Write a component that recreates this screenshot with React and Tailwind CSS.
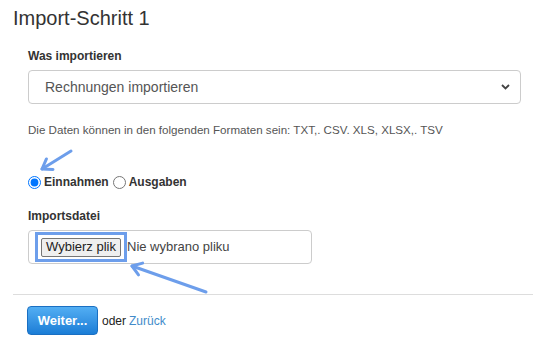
import React from "react"

function Arrow({ x1, y1, x2, y2 }) {
  // arrow pointing from (x1,y1) to tip (x2,y2)
  const a = Math.atan2(y2 - y1, x2 - x1)
  const len = 11
  const spread = 0.6
  const p1 = [x2 - len * Math.cos(a - spread), y2 - len * Math.sin(a - spread)]
  const p2 = [x2 - len * Math.cos(a + spread), y2 - len * Math.sin(a + spread)]
  return (
    <g stroke="#6d9eeb" strokeWidth="3" strokeLinecap="round" fill="none">
      <line x1={x1} y1={y1} x2={x2} y2={y2} />
      <polyline points={`${p1[0]},${p1[1]} ${x2},${y2} ${p2[0]},${p2[1]}`} strokeLinejoin="round" />
    </g>
  )
}

export default function App() {
  return (
    <div className="relative w-[533px] h-[352px] overflow-hidden bg-white font-['Liberation_Sans',Arial,sans-serif] text-[#333]">
      <h3 className="pl-[13px] pt-[6px] text-[20px] leading-[24px] font-normal">Import-Schritt 1</h3>

      <div className="px-[28px]">
        <label className="block mt-[18px] text-[12px] leading-[16px] font-bold">Was importieren</label>
        <div className="mt-[6px] flex h-[34px] w-[493px] items-center justify-between rounded-[4px] border border-[#ccc] pl-[16px] pr-[10px]">
          <span className="text-[14px] text-[#555]">Rechnungen importieren</span>
          <svg width="9" height="6" viewBox="0 0 9 6">
            <path d="M1 1 L4.5 4.5 L8 1" stroke="#444" strokeWidth="1.8" fill="none" />
          </svg>
        </div>
        <p className="mt-[19px] text-[11.6px] leading-[14px] text-[#555]">
          Die Daten können in den folgenden Formaten sein: TXT,. CSV. XLS, XLSX,. TSV
        </p>

        <div className="mt-[37px] flex items-center text-[12px] font-bold leading-[16px]">
          <input type="radio" name="typ" defaultChecked className="m-0 mr-[3px] h-[13px] w-[13px]" />
          <span>Einnahmen</span>
          <input type="radio" name="typ" className="m-0 ml-[4px] mr-[3px] h-[13px] w-[13px]" />
          <span>Ausgaben</span>
        </div>

        <label className="block mt-[18px] text-[12px] leading-[16px] font-bold">Importsdatei</label>
        <div className="mt-[6px] flex h-[34px] w-[284px] items-center rounded-[4px] border border-[#ccc]">
          <div className="ml-[6px] flex h-[30px] items-center border-[3px] border-[#6d9eeb] px-[3px]">
            <span className="flex h-[19px] w-[80px] items-center justify-center rounded-[2px] border border-[#767676] bg-[#efefef] text-[13px] text-[#222]">
              Wybierz plik
            </span>
          </div>
          <span className="text-[13px] text-[#444]">Nie wybrano pliku</span>
        </div>
      </div>

      <div className="ml-[13px] mt-[30px] border-t border-[#ddd]" />

      <div className="flex items-center pl-[27px] pt-[11px]">
        <button className="h-[29px] w-[71px] rounded-[4px] border border-[#1a6fc2] bg-gradient-to-b from-[#52aef3] to-[#1a7dd6] text-[13px] font-bold text-white">
          Weiter...
        </button>
        <span className="ml-[4px] text-[12px] text-[#222]">oder</span>
        <a className="ml-[3px] text-[12px] text-[#428bca]">Zurück</a>
      </div>

      <svg className="pointer-events-none absolute left-0 top-0" width="533" height="352">
        <Arrow x1={71} y1={151} x2={42} y2={169} />
        <Arrow x1={206} y1={292} x2={132} y2={266} />
      </svg>
    </div>
  )
}
